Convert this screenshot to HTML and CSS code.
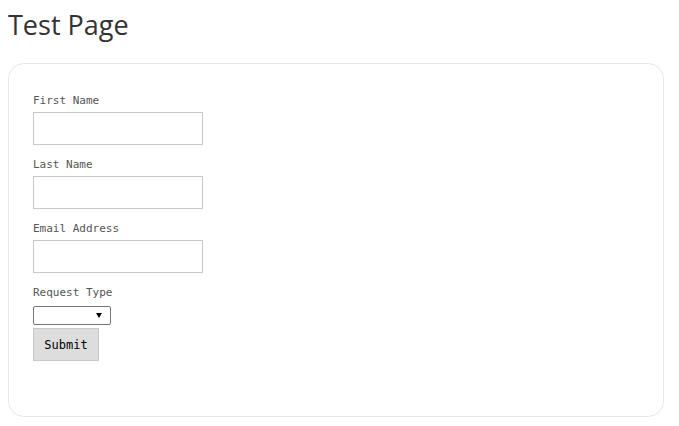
FILE: index.html
```html
<!DOCTYPE html>
<html>
<head>
<meta charset="utf-8">
<title>Test Page</title>
<link rel="stylesheet" href="styles.css">
</head>
<body>
<h1 class="title">Test Page</h1>
<div class="card">
  <form class="form">
    <div class="field">
      <label class="label">First Name</label>
      <input class="input" type="text">
    </div>
    <div class="field">
      <label class="label">Last Name</label>
      <input class="input" type="text">
    </div>
    <div class="field">
      <label class="label">Email Address</label>
      <input class="input" type="text">
    </div>
    <div class="field field-last">
      <label class="label label-select">Request Type</label>
      <span class="select-wrap">
        <select class="select"><option></option></select>
        <span class="select-arrow"></span>
      </span>
    </div>
    <button class="button" type="button">Submit</button>
  </form>
</div>
</body>
</html>
```
FILE: styles.css
```css
html, body {
  background: #fff;
}
body {
  margin: 8px;
  font-family: "DejaVu Sans Mono", monospace;
}
.title {
  margin: 0 0 22px 0;
  font-family: "Open Sans", sans-serif;
  font-weight: 400;
  font-size: 27px;
  line-height: 33px;
  color: #333;
}
.card {
  width: 656px;
  height: 354px;
  border: 1px solid #e8e8e8;
  border-radius: 16px;
  padding: 28px 24px 0 24px;
  box-sizing: border-box;
}
.form {
  display: flex;
  flex-direction: column;
  align-items: flex-start;
}
.field {
  display: flex;
  flex-direction: column;
  align-items: flex-start;
  margin-bottom: 11px;
}
.field-last {
  margin-bottom: 3px;
}
.label {
  font-size: 11px;
  line-height: 16px;
  color: #555;
  padding-top: 1px;
  margin-bottom: 3px;
}
.label-select {
  margin-bottom: 5px;
}
.input {
  width: 170px;
  height: 33px;
  box-sizing: border-box;
  border: 1px solid #c8c8c8;
  border-radius: 0;
  margin: 0;
  padding: 0 6px;
  background: #fff;
  outline: none;
}
.select-wrap {
  position: relative;
  display: inline-block;
  width: 78px;
  height: 19px;
}
.select {
  -webkit-appearance: none;
  appearance: none;
  width: 78px;
  height: 19px;
  box-sizing: border-box;
  border: 1px solid #767676;
  border-radius: 2px;
  background: #fff;
  margin: 0;
  padding: 0;
  display: block;
}
.select-arrow {
  position: absolute;
  right: 9px;
  top: 7px;
  width: 0;
  height: 0;
  border-left: 3px solid transparent;
  border-right: 3px solid transparent;
  border-top: 5px solid #000;
  pointer-events: none;
}
.button {
  width: 66px;
  height: 33px;
  box-sizing: border-box;
  border: 1px solid #c8c8c8;
  border-radius: 0;
  background: #ddd;
  font-family: "DejaVu Sans Mono", monospace;
  font-size: 12px;
  color: #000;
  margin: 0;
  padding: 0;
}
```
